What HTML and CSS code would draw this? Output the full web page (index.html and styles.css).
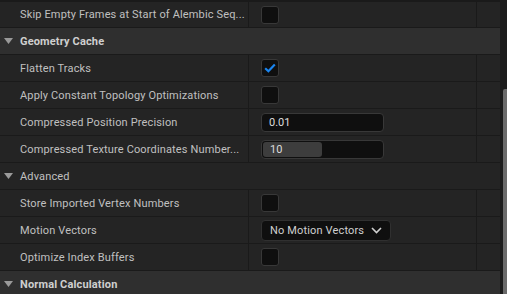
FILE: index.html
```html
<!DOCTYPE html>
<html>
<head>
<meta charset="utf-8">
<link rel="stylesheet" href="styles.css">
</head>
<body>
<div class="panel">
  <div class="list">
    <div class="topstrip"></div>
    <div class="row first">
      <div class="name">Skip Empty Frames at Start of Alembic Seq...</div>
      <div class="value"><span class="check"></span></div>
      <div class="extra"></div>
    </div>
    <div class="cat">
      <svg class="tri" width="9" height="6" viewBox="0 0 9 6"><path d="M0 0H9L4.5 6Z" fill="#9a9a9a"/></svg>
      <span>Geometry Cache</span>
    </div>
    <div class="row">
      <div class="name">Flatten Tracks</div>
      <div class="value"><span class="check"><svg width="12" height="10" viewBox="0 0 12 10"><path d="M1.2 5.2L4.4 8.2L10.8 1.6" fill="none" stroke="#1a85f0" stroke-width="2.2"/></svg></span></div>
      <div class="extra"></div>
    </div>
    <div class="row">
      <div class="name">Apply Constant Topology Optimizations</div>
      <div class="value"><span class="check"></span></div>
      <div class="extra"></div>
    </div>
    <div class="row">
      <div class="name">Compressed Position Precision</div>
      <div class="value"><div class="field">0.01</div></div>
      <div class="extra"></div>
    </div>
    <div class="row">
      <div class="name">Compressed Texture Coordinates Number...</div>
      <div class="value"><div class="field slider"><div class="fill" style="width:59px"></div><span class="num">10</span></div></div>
      <div class="extra"></div>
    </div>
    <div class="subcat">
      <svg class="tri" width="9" height="6" viewBox="0 0 9 6"><path d="M0 0H9L4.5 6Z" fill="#9a9a9a"/></svg>
      <span>Advanced</span>
    </div>
    <div class="row">
      <div class="name">Store Imported Vertex Numbers</div>
      <div class="value"><span class="check"></span></div>
      <div class="extra"></div>
    </div>
    <div class="row">
      <div class="name">Motion Vectors</div>
      <div class="value"><div class="combo">No Motion Vectors<svg width="11" height="7" viewBox="0 0 11 7"><path d="M1 1L5.5 5.5L10 1" fill="none" stroke="#d0d0d0" stroke-width="1.6"/></svg></div></div>
      <div class="extra"></div>
    </div>
    <div class="row">
      <div class="name">Optimize Index Buffers</div>
      <div class="value"><span class="check"></span></div>
      <div class="extra"></div>
    </div>
    <div class="cat">
      <svg class="tri" width="9" height="6" viewBox="0 0 9 6"><path d="M0 0H9L4.5 6Z" fill="#9a9a9a"/></svg>
      <span>Normal Calculation</span>
    </div>
  </div>
  <div class="scrollbar"><div class="thumb"></div></div>
</div>
</body>
</html>
```

FILE: styles.css
```css
html, body {
  margin: 0;
  padding: 0;
  background: #1a1a1a;
  overflow: hidden;
}
body {
  font-family: Roboto, "Open Sans", sans-serif;
  font-size: 11px;
  color: #c0c0c0;
}
.panel {
  display: flex;
  width: 507px;
  height: 294px;
  overflow: hidden;
}
.list {
  width: 500px;
  display: flex;
  flex-direction: column;
}
.topstrip {
  height: 2px;
  background: #1a1a1a;
  flex: none;
}
.row {
  display: flex;
  height: 26px;
  flex: none;
  background: #242424;
  border-bottom: 1px solid #1a1a1a;
}
.row.first {
  height: 25px;
}
.name {
  width: 228px;
  padding-left: 20px;
  display: flex;
  align-items: center;
  white-space: nowrap;
  overflow: hidden;
  letter-spacing: 0.15px;
  border-right: 1px solid #1a1a1a;
}
.value {
  width: 215px;
  padding-left: 12px;
  display: flex;
  align-items: center;
  border-right: 1px solid #1a1a1a;
}
.extra {
  flex: 1;
}
.check {
  width: 16px;
  height: 16px;
  border: 1px solid #383838;
  border-radius: 3px;
  background: #0f0f0f;
  display: flex;
  align-items: center;
  justify-content: center;
}
.cat, .subcat {
  display: flex;
  align-items: center;
  height: 26px;
  flex: none;
  border-bottom: 1px solid #1a1a1a;
  padding-left: 4px;
  gap: 7px;
  letter-spacing: 0.15px;
}
.cat {
  background: #2f2f2f;
  font-weight: bold;
  color: #cfcfcf;
}
.subcat {
  background: #242424;
}
.field {
  width: 121px;
  height: 17px;
  border: 1px solid #383838;
  border-radius: 4px;
  background: #0f0f0f;
  color: #dcdcdc;
  display: flex;
  align-items: center;
  padding-left: 0;
  box-sizing: content-box;
  position: relative;
  overflow: hidden;
}
.field:not(.slider) {
  padding-left: 7px;
  width: 114px;
}
.slider .fill {
  position: absolute;
  left: 1px;
  top: 1px;
  bottom: 1px;
  background: #3d3d3d;
  border-radius: 3px;
}
.slider .num {
  position: relative;
  padding-left: 8px;
}
.combo {
  height: 19px;
  width: 120px;
  padding-left: 8px;
  border: 1px solid #303030;
  border-radius: 4px;
  background: #0f0f0f;
  color: #d0d0d0;
  display: flex;
  align-items: center;
  gap: 7px;
  white-space: nowrap;
  letter-spacing: 0.15px;
}
.scrollbar {
  width: 7px;
  background: #1c1c1c;
  display: flex;
  flex-direction: column;
  align-items: flex-end;
}
.thumb {
  margin-top: 89px;
  width: 4px;
  flex: 1;
  background: #6a6a6a;
  border-radius: 2px 0 0 0;
}
```
